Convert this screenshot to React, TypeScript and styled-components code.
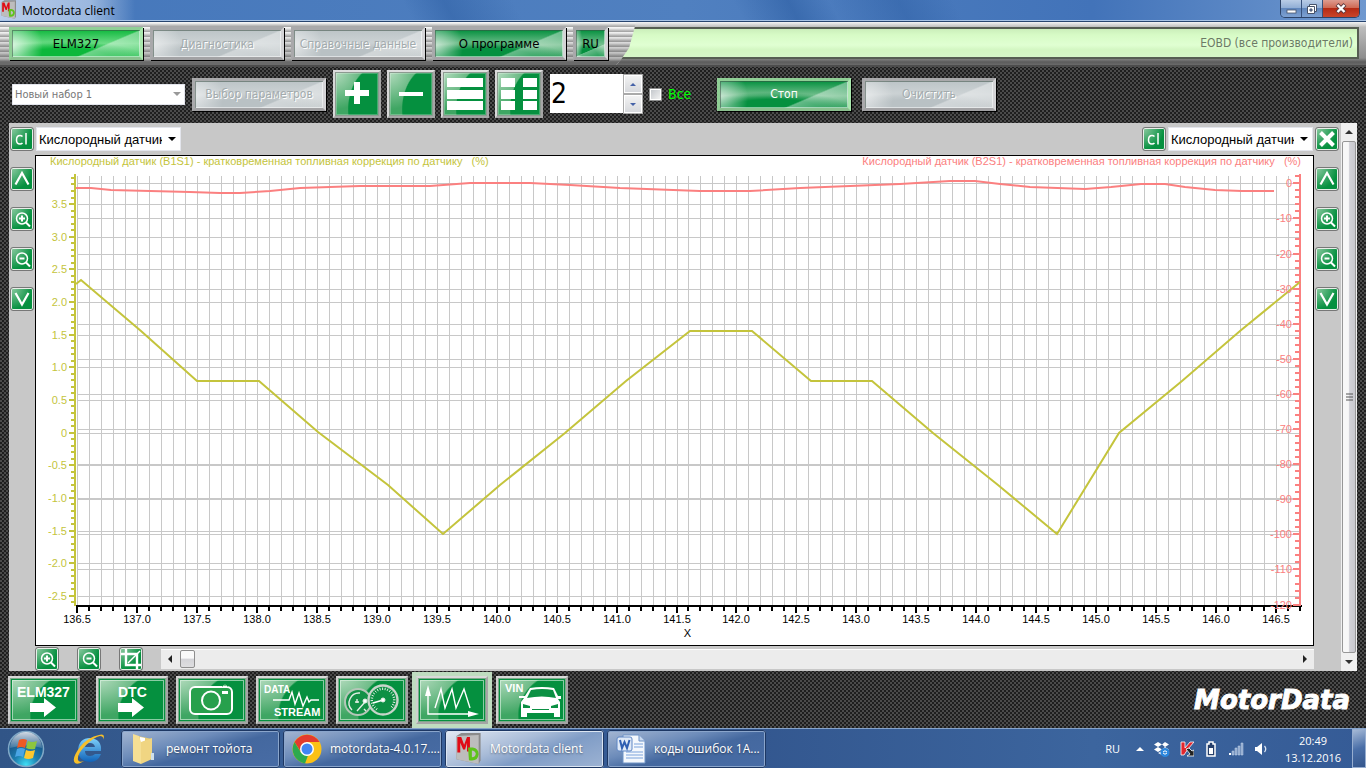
import React, { useLayoutEffect, useRef, useState } from 'react';
import styled, { createGlobalStyle, css } from 'styled-components';

const ui = '"DejaVu Sans Condensed", "DejaVu Sans", sans-serif';
const shell = '"Open Sans", "Noto Sans", sans-serif';
const arial = '"Liberation Sans", Arial, sans-serif';

const GlobalStyle = createGlobalStyle`
  * { box-sizing: border-box; }
  body { margin: 0; background: #222; font-family: ${ui}; }
  button, input, select { margin: 0; font-family: inherit; }
  svg { display: block; flex: none; }
`;

const Page = styled.div`
  display: flex;
  flex-direction: column;
  height: 100vh;
  min-height: 560px;
  min-width: 1020px;
  background: repeating-conic-gradient(#1e1e1e 0 25%, #4b4b4b 0 50%) 0 0 / 4px 4px;
`;

/* ---------- window title ---------- */
const TitleBar = styled.header`
  display: flex;
  align-items: flex-start;
  height: 22px;
  flex: none;
  padding: 0 6px 0 1px;
  border-bottom: 1px solid #28456f;
  box-shadow: inset 0 -1px #a9c4e6;
  background:
    linear-gradient(90deg, rgba(225, 235, 250, 0.75) 0, rgba(200, 218, 242, 0.65) 90px, transparent 135px),
    linear-gradient(62deg, transparent 30%, rgba(30, 80, 150, 0.35) 33%, transparent 38%, transparent 54%, rgba(30, 80, 150, 0.4) 58%, transparent 61%, rgba(30, 80, 150, 0.3) 66%, transparent 70%),
    linear-gradient(90deg, #4577bb, #5080c0 50%, #4273b9 80%, #6f98cf);
`;
const WindowTitle = styled.h1`
  flex: 1;
  margin: 0 0 0 6px;
  font: 400 12px/21px ${shell};
  color: #000;
`;
const WindowButtons = styled.div`
  display: flex;
  height: 18px;
  border: 1px solid #2c4368;
  border-top: 0;
  border-radius: 0 0 5px 5px;
  overflow: hidden;
`;
const WindowButton = styled.button<{ $close?: boolean }>`
  display: grid;
  place-items: center;
  width: ${p => (p.$close ? 36 : 21)}px;
  padding: 0;
  border: 0;
  border-right: ${p => (p.$close ? 0 : 1)}px solid #37517c;
  background: ${p =>
    p.$close
      ? 'linear-gradient(#dd9c90, #cf6a55 45%, #b52a14 50%, #c9452a)'
      : 'linear-gradient(#b9cce6, #92afd6 45%, #6187bd 50%, #7ea2d3)'};
`;

/* ---------- menu ---------- */
const MenuBar = styled.nav`
  display: flex;
  align-items: stretch;
  height: 43px;
  flex: none;
  background: linear-gradient(#f4f4f4, #bdbdbd 5px, #8d8d8d 36px, #5c5c5c 40px, #6a6a6a);
`;
const Steel = styled.div`
  display: flex;
  align-items: flex-start;
  gap: 7px;
  width: 636px;
  padding: 5px 0 0 9px;
  background:
    linear-gradient(transparent 8px, rgba(60, 60, 60, 0.35) 38px, #6a6a6a 40px),
    repeating-linear-gradient(#f4f4f4 0 1px, #dcdcdc 2px, #b0b0b0 4px, #a2a2a2 5px);
  clip-path: polygon(0 0, 100% 0, 634px 8px, 629px 26px, 620px 39px, 616px 100%, 0 100%);
`;
const Status = styled.output`
  flex: 1;
  height: 32px;
  margin: 5px 7px 0 -16px;
  padding-right: 4px;
  border: 2px solid #565d52;
  border-left: 0;
  background: linear-gradient(#cbeebb, #d7fbc6 6px, #e0ffd2 16px, #d3f6c2 21px, #d6f6c8);
  color: #6c7a66;
  font: 400 12px/29px ${ui};
  text-align: right;
`;

const green = css`
  color: #000;
  background:
    linear-gradient(157deg, transparent 66%, rgba(255, 255, 255, 0.38) 68%, rgba(255, 255, 255, 0.1) 96%),
    radial-gradient(ellipse 22% 110% at 0 60%, rgba(255, 255, 255, 0.6), transparent),
    radial-gradient(ellipse 62% 58% at 42% 100%, #05903f 55%, transparent),
    linear-gradient(#05903f, #76c190 55%, #2f9f5c);
`;
const bright = css`
  color: #000;
  background:
    linear-gradient(157deg, transparent 66%, rgba(255, 255, 255, 0.4) 68%, rgba(255, 255, 255, 0.15) 96%),
    radial-gradient(ellipse 24% 120% at 0 60%, rgba(255, 255, 255, 0.75), transparent),
    radial-gradient(ellipse 62% 58% at 42% 100%, #0cb83b 55%, transparent),
    linear-gradient(#12b93f, #6cdc86 50%, #35c55b);
`;
const disabledFace = css`
  color: #a3abad;
  text-shadow: 1px 1px #fff;
  background:
    linear-gradient(157deg, transparent 66%, rgba(255, 255, 255, 0.35) 68%, rgba(255, 255, 255, 0.2) 96%),
    radial-gradient(ellipse 22% 120% at 0 60%, rgba(255, 255, 255, 0.5), transparent),
    radial-gradient(ellipse 62% 58% at 42% 100%, #b9c1c4 55%, transparent),
    linear-gradient(#bcc4c7, #cdd3d5 50%, #bfc6c8);
`;
type Tone = 'green' | 'bright' | 'disabled';
const PlateButton = styled.button<{ $tone: Tone; $small?: boolean; $mint?: boolean }>`
  flex: none;
  width: ${p => (p.$small ? 35 : 134)}px;
  height: 33px;
  padding: 0;
  border: 3px solid;
  border-color: ${p =>
    p.$tone === 'bright' || p.$mint ? '#8fcf95 #a9e8ae #8ac08e #8fcf95' : '#a9a9ab #d4d4d6 #a2a2a4 #a9a9ab'};
  ${p => (p.$tone === 'green' ? green : p.$tone === 'bright' ? bright : disabledFace)}
  background-origin: padding-box;
  background-clip: padding-box;
  background-repeat: no-repeat;
  box-shadow: inset 1px 1px rgba(60, 80, 70, 0.55), inset -1px -1px rgba(255, 255, 255, 0.5), 1px 1px #000;
  font: 400 13px/26px ${ui};
  font-size: ${p => (p.$tone === 'disabled' || p.$mint ? 12 : 13)}px;
  white-space: nowrap;
  ${p => p.$mint && 'color: #fff;'}
`;

/* ---------- tool bar ---------- */
const ToolBar = styled.div`
  display: flex;
  align-items: center;
  height: 58px;
  flex: none;
  padding: 0 12px;
  box-shadow: inset 0 2px #4c4c4c;
`;
const Drop = styled.div<{ $width: number; $dim?: boolean }>`
  display: grid;
  align-items: center;
  flex: none;
  width: ${p => p.$width}px;
  height: ${p => (p.$dim ? 21 : 24)}px;
  background: #fff;
  border: 1px solid #e3e5ec;
  > * { grid-area: 1 / 1; }
  > svg { justify-self: end; margin-right: ${p => (p.$dim ? 3 : 4)}px; pointer-events: none; }
  select {
    appearance: none;
    width: 100%;
    height: 100%;
    border: 0;
    padding: 0 18px 0 2px;
    background: transparent;
    color: ${p => (p.$dim ? '#777' : '#000')};
    opacity: 1;
    font-size: ${p => (p.$dim ? 11 : 13)}px;
    font-family: ${p => (p.$dim ? ui : arial)};
    overflow: hidden;
  }
`;
const ToolGroup = styled.div`
  display: flex;
  gap: 6px;
  margin-right: 7px;
`;
const gloss = css`
  background:
    radial-gradient(ellipse 82% 115% at 100% 85%, #05903f 84%, transparent 87%),
    radial-gradient(ellipse at 0 0, #b5dcbf, #3fa663 60%);
`;
const ToolButton = styled.button`
  display: grid;
  place-items: center;
  width: 48px;
  height: 48px;
  padding: 0;
  border: 2px solid;
  border-color: #dedede #a6a6a6 #a6a6a6 #d8d8d8;
  box-shadow: inset 0 0 0 1px #8c9a90, inset 0 0 0 2px rgba(255, 255, 255, 0.25);
  ${gloss}
`;
const Spinner = styled.div`
  display: flex;
  height: 40px;
  input {
    width: 73px;
    height: 39px;
    padding: 0 0 0 1px;
    border: 0;
    border-radius: 0;
    background: #fff;
    color: #000;
    font-size: 28px;
    appearance: textfield;
  }
`;
const SpinKeys = styled.div`
  display: grid;
  grid-template-rows: 1fr 1fr;
  width: 20px;
  background: #fff;
`;
const SpinKey = styled.button`
  display: grid;
  place-items: center;
  padding: 0;
  border: 1px solid #aaa;
  outline: 1px solid #fff;
  outline-offset: -2px;
  background: linear-gradient(#f4f4f4, #d5d7db);
`;
const CheckLabel = styled.label`
  display: flex;
  align-items: center;
  gap: 6px;
  width: 68px;
  margin-left: 6px;
  color: #00ff00;
  font-size: 14px;
  input {
    appearance: none;
    width: 13px;
    height: 13px;
    border: 1px solid #8e8f8f;
    outline: 1px solid #fff;
    outline-offset: -2px;
    background: linear-gradient(135deg, #bfc3c8, #f6f6f6);
  }
`;
const Actions = styled.div`
  display: flex;
  gap: 11px;
`;

/* ---------- chart panel ---------- */
const Panel = styled.main`
  display: flex;
  flex: 1;
  min-height: 0;
  margin: 0 9px;
  background: #c8c8c8;
`;
const Side = styled.div<{ $width: number }>`
  display: flex;
  flex-direction: column;
  gap: 16px;
  flex: none;
  width: ${p => p.$width}px;
  padding: 4px 1px;
`;
const Mini = styled.button`
  display: grid;
  place-items: center;
  flex: none;
  width: 24px;
  height: 24px;
  padding: 0;
  border: 1px solid #777;
  border-radius: 3px;
  box-shadow: inset 0 0 0 1px #e8efe9;
  background: radial-gradient(ellipse at 0 0, #8fcba3, #05903f 70%);
`;
const Center = styled.div`
  display: flex;
  flex-direction: column;
  flex: 1;
  min-width: 0;
`;
const PickerRow = styled.div`
  display: flex;
  justify-content: space-between;
  align-items: center;
  height: 32px;
  flex: none;
  padding: 0 1px 0 1px;
`;
const Picker = styled.div`
  display: flex;
  gap: 2px;
`;
const ChartFrame = styled.figure`
  flex: 1;
  min-height: 0;
  margin: 0;
  overflow: hidden;
  border: 1px solid #000;
  background: #fff;
  text { font-family: ${arial}; font-size: 11px; }
`;
const FootRow = styled.div`
  display: flex;
  align-items: center;
  gap: 18px;
  height: 25px;
  flex: none;
`;
const HScroll = styled.div`
  display: flex;
  align-items: center;
  flex: 1;
  gap: 8px;
  height: 20px;
  padding: 0 7px;
  border-top: 1px solid #fff;
  background: #ececec;
  i {
    width: 15px;
    height: 18px;
    margin-right: auto;
    border: 1px solid #8e8e8e;
    border-radius: 2px;
    background: linear-gradient(#fafafa 45%, #d4d4d8 50%, #dedee0);
  }
`;
const VScroll = styled.div`
  display: flex;
  flex-direction: column;
  align-items: center;
  flex: none;
  width: 16px;
  background: #f0f0f0;
  > svg { margin: 7px 0; }
  i {
    display: grid;
    place-items: center;
    flex: 1;
    width: 14px;
    border: 1px solid #979797;
    border-radius: 2px;
    background: linear-gradient(90deg, #f8f8f8 45%, #d2d2d8 55%, #c9c9ce);
  }
`;

/* ---------- mode bar ---------- */
const ModeBar = styled.nav`
  display: flex;
  align-items: center;
  height: 57px;
  flex: none;
  padding: 0 16px 0 4px;
`;
const ModeSlot = styled.div<{ $active?: boolean; $wide?: boolean }>`
  display: grid;
  place-items: center;
  width: 80px;
  height: 56px;
  margin-right: ${p => (p.$wide ? 8 : 0)}px;
  background: ${p => (p.$active ? '#bfdcc0' : 'transparent')};
`;
const ModeButton = styled.button`
  width: 72px;
  height: 48px;
  padding: 0;
  border: 2px solid;
  border-color: #d9d9d9 #a5a5a5 #a5a5a5 #cfcfcf;
  box-shadow: inset 0 0 0 1px #7fa88b, inset 0 0 0 2px #05903f, inset 0 0 0 3px rgba(225, 245, 230, 0.6);
  ${gloss}
  text { font-family: ${arial}; font-weight: 700; fill: #fff; }
`;
const Brand = styled.strong`
  margin-left: auto;
  color: #fff;
  font: italic 700 26px/32px "DejaVu Sans", sans-serif;
  -webkit-text-stroke: 1px #fff;
`;

/* ---------- task bar ---------- */
const TaskBar = styled.footer`
  display: flex;
  align-items: center;
  height: 40px;
  flex: none;
  border-top: 1px solid #86a3ca;
  background: linear-gradient(90deg, #315587, #3a619b 30%, #33578f 55%, #3c659e 80%, #355b96);
  font-family: ${shell};
  color: #fff;
`;
const Bare = styled.button`
  padding: 0;
  border: 0;
  background: none;
`;
const Launchers = styled.div`
  display: flex;
  align-items: center;
  gap: 27px;
  width: 121px;
  padding-left: 7px;
`;
const Tasks = styled.div`
  display: flex;
  gap: 3px;
  flex: 1;
`;
const Task = styled.button<{ $active?: boolean }>`
  display: flex;
  align-items: center;
  gap: 8px;
  width: 159px;
  height: 38px;
  padding: 0 8px;
  border: 1px solid ${p => (p.$active ? '#e1e9f5' : '#8ea9cd')};
  border-radius: 3px;
  outline: 1px solid #1d3763;
  outline-offset: -1px;
  box-shadow: inset 0 0 0 1px ${p => (p.$active ? '#dbe5f2' : '#8aa5cb')};
  background: ${p =>
    p.$active
      ? 'linear-gradient(160deg, #e3eaf4, #a9bcd8 40%, #7f9cc6 60%, #9db3d3)'
      : 'linear-gradient(165deg, #a4b6d2, #6d8cba 35%, #44689f 55%, #486ca5)'};
  color: #fff;
  font-size: 12px;
  white-space: nowrap;
  text-shadow: 0 1px 2px rgba(0, 0, 0, 0.45);
  > svg { min-width: 28px; }
`;
const Tray = styled.div`
  display: flex;
  align-items: center;
  gap: 10px;
  font-size: 11px;
`;
const Lang = styled.span`
  margin-right: 6px;
  line-height: 16px;
`;
const Clock = styled.time`
  width: 78px;
  margin-left: 6px;
  font-size: 11px;
  line-height: 17px;
  text-align: center;
`;
const Desktop = styled.button`
  width: 14px;
  height: 39px;
  padding: 0;
  border: 1px solid #97aed0;
  background: linear-gradient(160deg, #a5b9d6, #4a6fa8 50%, #34568c);
`;

/* ---------- icons ---------- */
const Caret = ({ w = 8, up, fill = '#000' }: { w?: number; up?: boolean; fill?: string }) => (
  <svg width={w} height={w / 2} viewBox="0 0 8 4" aria-hidden="true">
    <path d={up ? 'M0 4L4 0L8 4Z' : 'M0 0H8L4 4Z'} fill={fill} />
  </svg>
);
const SideCaret = ({ left }: { left?: boolean }) => (
  <svg width="4" height="8" viewBox="0 0 4 8" aria-hidden="true">
    <path d={left ? 'M4 0L0 4L4 8Z' : 'M0 0L4 4L0 8Z'} fill="#222" />
  </svg>
);
const AppLogo = ({ w, h }: { w: number; h: number }) => (
  <svg width={w} height={h} viewBox="0 0 26 32" aria-hidden="true">
    <path d="M1 3L6 0H26V28L24 32L1 27Z" fill="#8b8b8b" />
    <path d="M1 3L24 2V32L1 27Z" fill="#bdbdbd" />
    <path d="M2 20V4H6L9 12L12 4H15V19H12V10L10 17H8L5 10V20Z" fill="#e00b16" />
    <path d="M13 15H18Q24 16 24 22Q23 30 14 28ZM17 18V25Q21 25 21 21Q20 18 17 18Z" fill="#5ec31a" fillRule="evenodd" />
  </svg>
);
const miniPaths = {
  cl: <><path d="M10.500 7.500Q9.500 6.500 8 6.500Q4.500 6.500 4.500 11Q4.500 15 8 15Q9.500 15 10.500 14" /><path d="M14 4V15.500" /></>,
  up: <path d="M3.500 15.500L10 4L16.500 15.500" strokeWidth="2.2" />,
  down: <path d="M3.500 4L10 15.500L16.500 4" strokeWidth="2.2" />,
  plus: <><circle cx="10" cy="9.500" r="5.500" /><path d="M14 13.500L18 17.500" strokeWidth="2" /><path d="M7 9.500H13M10 6.500V12.500" strokeWidth="2" /></>,
  minus: <><circle cx="10" cy="9.500" r="5.500" /><path d="M14 13.500L18 17.500" strokeWidth="2" /><path d="M7.500 9.500H12.500" strokeWidth="2" /></>,
  close: <path d="M3.500 3.500L16.500 16.500M16.500 3.500L3.500 16.500" strokeWidth="4" />,
  crop: <><path d="M0 5H16V20M5 0V16H20" strokeWidth="2.4" /><path d="M7 14L19 2" /></>,
};
const MiniIcon = ({ name, label }: { name: keyof typeof miniPaths; label: string }) => (
  <Mini type="button" aria-label={label}>
    <svg width="20" height="20" viewBox="0 0 20 20" fill="none" stroke="#fff" strokeWidth="1.5">{miniPaths[name]}</svg>
  </Mini>
);

const sideTools: [keyof typeof miniPaths, string][] = [
  ['up', 'Вверх'], ['plus', 'Увеличить'], ['minus', 'Уменьшить'], ['down', 'Вниз'],
];

const toolIcons = [
  { label: 'Добавить', art: <path d="M19 10H25V18H34V24H25V32H19V24H10V18H19Z" /> },
  { label: 'Удалить', art: <path d="M10 20H34V24H10Z" /> },
  { label: 'Строки', art: <path d="M4 6H40V15H4ZM4 18H40V27H4ZM4 29H40V38H4Z" /> },
  { label: 'Таблица', art: <path d="M4 6H18V15H4ZM26 6H40V15H26ZM4 18H18V27H4ZM26 18H40V27H26ZM4 29H18V38H4ZM26 29H40V38H26Z" /> },
];

const arrow = 'M20 25H34V20L46 29.500L34 39V34H20Z';
const spokes = Array.from({ length: 22 }, (_, i) => {
  const a = ((i * 13 + 125) * Math.PI) / 180;
  return `M${45 + 10 * Math.cos(a)} ${22 + 10 * Math.sin(a)}L${45 + 12.5 * Math.cos(a)} ${22 + 12.5 * Math.sin(a)}`;
}).join('');
const modes = [
  { label: 'ELM327', wide: true, art: <><text x="7" y="19" fontSize="14">ELM327</text><path d={arrow} fill="#fff" /></> },
  { label: 'DTC', art: <><text x="20" y="19" fontSize="14">DTC</text><path d={arrow} fill="#fff" /></> },
  {
    label: 'Камера',
    art: (
      <g fill="none" stroke="#fff" strokeWidth="2">
        <rect x="12" y="9" width="42" height="27" rx="5" fill="#27a04c" />
        <circle cx="33" cy="22.500" r="9" />
        <path d="M44 14.500H50" strokeWidth="3" /><path d="M44 9Q47 5 50 9" strokeWidth="1" stroke="#9fd3a8" />
      </g>
    ),
  },
  {
    label: 'Поток данных',
    art: (
      <>
        <text x="6" y="15" fontSize="10">DATA</text>
        <text x="16" y="38" fontSize="11">STREAM</text>
        <path d="M15 22H31L34 14L37 26L41 15L45 28L49 19L51 24L53 22H61" fill="none" stroke="#fff" strokeWidth="1.400" />
      </>
    ),
  },
  {
    label: 'Приборы',
    art: (
      <g fill="none" stroke="#e3eee5">
        <circle cx="20" cy="24" r="13" strokeWidth="2" stroke="#b4c7b8" fill="#149147" />
        <path d="M14 32A10 10 0 0 1 22 15M27 24L19 33M17 24H21M19 21V25M26 31L28 33" strokeWidth="1.400" />
        <circle cx="27" cy="23" r="2" fill="#fff" />
        <circle cx="45" cy="22" r="14.500" strokeWidth="2.400" stroke="#c8d5ca" fill="#0d9044" />
        <path d={spokes} />
        <path d="M35 25L45 22" strokeWidth="1.600" stroke="#fff" />
        <circle cx="45" cy="22" r="2" fill="#fff" />
      </g>
    ),
  },
  {
    label: 'Графики',
    active: true,
    art: (
      <g fill="none" stroke="#fff" strokeWidth="1.400">
        <path d="M10 16V36H52" />
        <path d="M10 7L13 18H7ZM61 36L50 33V39Z" fill="#fff" stroke="none" />
        <path d="M17 30L23 11L27 30L34 11L38 30L46 11L52 30" />
      </g>
    ),
  },
  {
    label: 'VIN',
    art: (
      <>
        <text x="7" y="14" fontSize="11">VIN</text>
        <path d="M32 10Q44 8 56 10L60 18L63 18V21H60L62 24V39H56V35H29V39H23V24L26 20H21V18H27Z" fill="#fff" />
        <path d="M33 12Q44 10 55 12L58 20Q44 17 29 20Z" fill="#0b9043" />
        <path d="M25 26L32 28V30H25ZM60 26L53 28V30H60ZM34 31H51V32H34Z" fill="#0b9043" />
      </>
    ),
  },
];

const StartOrb = () => (
  <svg width="38" height="38" viewBox="0 0 38 38" aria-hidden="true">
    <defs>
      <radialGradient id="orb" cx="50%" cy="95%" r="85%">
        <stop offset="0" stopColor="#3fe0f6" /><stop offset=".4" stopColor="#1d7fb0" /><stop offset="1" stopColor="#17467a" />
      </radialGradient>
      <linearGradient id="shine" x1="0" y1="0" x2="0" y2="1">
        <stop offset="0" stopColor="#fff" stopOpacity=".8" /><stop offset="1" stopColor="#fff" stopOpacity=".15" />
      </linearGradient>
    </defs>
    <circle cx="19" cy="19" r="17.500" fill="url(#orb)" stroke="#7fa8c6" strokeWidth="1.500" />
    <path d="M3 18A16 16 0 0 1 35 18Q19 13 3 18Z" fill="url(#shine)" />
    <path d="M12 10Q16 8 20 10L18 18Q14 16 10 18Z" fill="#ee5a24" />
    <path d="M21 11Q25 13 30 11L28 19Q23 20 19 18Z" fill="#8dc63f" />
    <path d="M10 19Q14 17 18 19L16 27Q12 25 8 27Z" fill="#4aa5e4" />
    <path d="M19 20Q23 22 28 20L26 28Q21 30 17 28Z" fill="#fdc82f" />
  </svg>
);
const Explorer = () => (
  <svg width="34" height="34" viewBox="0 0 34 34" aria-hidden="true">
    <defs>
      <linearGradient id="ie" x1="0" y1="0" x2="0" y2="1"><stop offset="0" stopColor="#7fd0fa" /><stop offset="1" stopColor="#0f62b8" /></linearGradient>
    </defs>
    <path d="M29 19H13Q13 24 18 24Q21 24 23 22H29Q26 30 18 30Q6 29 6 18Q7 6 18 6Q30 7 29 19ZM13 15H23Q22 11 18 11Q14 11 13 15Z" fill="url(#ie)" fillRule="evenodd" />
    <path d="M31 8Q34 1 27 3Q16 5 8 15Q-1 27 3 31Q6 33 12 29Q7 31 6 28Q5 22 13 14Q22 5 28 4Q32 4 31 8Z" fill="#f6bf2a" />
  </svg>
);
const Folder = () => (
  <svg width="28" height="32" viewBox="0 0 28 32" aria-hidden="true">
    <path d="M8 3L22 6V25L8 28Z" fill="#e6cc78" />
    <path d="M10 4L15 5V29L10 27Z" fill="#fff" />
    <path d="M3 1L9 3L11 9V31L3 28Z" fill="#f5df94" />
    <path d="M11 9L22 5V26L11 31Z" fill="#f0d582" />
    <path d="M21 20H24V27H21Z" fill="#cfe0ea" />
  </svg>
);
const Chrome = () => (
  <svg width="30" height="30" viewBox="0 0 30 30" aria-hidden="true">
    <circle cx="15" cy="15" r="14.500" fill="#fbc116" />
    <path d="M2.500 8A14.500 14.500 0 0 1 27.600 8H15L9 18Z" fill="#e33b2e" />
    <path d="M2.500 8L9 18.500Q12 22 16 21.500L13 29.500A14.500 14.500 0 0 1 2.500 8Z" fill="#2da94f" />
    <circle cx="15" cy="15" r="7" fill="#fff" /><circle cx="15" cy="15" r="5.500" fill="#4285f4" />
  </svg>
);
const Word = () => (
  <svg width="30" height="30" viewBox="0 0 30 30" aria-hidden="true">
    <path d="M7 1H23L29 7V29H7Z" fill="#f4f8fd" stroke="#6f93c6" />
    <path d="M23 1V7H29" fill="#c9daf0" stroke="#6f93c6" />
    <path d="M18 10H27M18 13H27M10 18H27M10 21H27M10 24H27" stroke="#7aa2db" />
    <rect x="1" y="3" width="15" height="14" rx="2" fill="#dfe9f7" stroke="#5f86c4" />
    <path d="M4 6L6 14L8.500 8L11 14L13.500 6" fill="none" stroke="#2f5fb3" strokeWidth="2" />
  </svg>
);

/* ---------- chart ---------- */
const YELLOW = '#c4c43c';
const PINK = '#fb8080';
type Point = [number, number];
const sensor1: Point[] = [
  [136.49, 2.27], [136.53, 2.33], [137.03, 1.55], [137.5, 0.79], [138.02, 0.79], [138.51, 0.01], [139.09, -0.8],
  [139.55, -1.56], [140.03, -0.8], [140.57, 0], [141.08, 0.79], [141.61, 1.56], [142.13, 1.56], [142.62, 0.79],
  [143.13, 0.79], [143.64, 0], [144.18, -0.8], [144.67, -1.56], [145.19, 0], [145.72, 0.79], [146.2, 1.55], [146.7, 2.3],
];
const sensor2: Point[] = [
  [136.49, -1.3], [136.62, -1.3], [136.78, -1.8], [137.11, -2.1], [137.44, -2.6], [137.69, -2.9], [137.86, -2.9],
  [138.11, -2.1], [138.36, -1.4], [138.86, -0.7], [139.44, -0.7], [139.78, 0], [140.28, 0], [140.61, -0.5],
  [141.03, -1.3], [141.7, -2.2], [142.11, -2.2], [142.53, -1.4], [142.95, -0.7], [143.36, -0.2], [143.78, 0.6],
  [143.99, 0.6], [144.2, -0.1], [144.45, -1], [144.91, -1.6], [145.12, -1], [145.37, -0.1], [145.57, -0.1],
  [145.74, -1], [145.99, -1.8], [146.22, -2.1], [146.48, -2.1],
];
const range = (from: number, to: number) => Array.from({ length: to - from + 1 }, (_, i) => from + i);

function Chart() {
  const frame = useRef<HTMLElement>(null);
  const [size, setSize] = useState({ w: 1277, h: 489 });
  useLayoutEffect(() => {
    const el = frame.current;
    if (!el) return;
    const measure = () => setSize({ w: el.clientWidth, h: el.clientHeight });
    measure();
    const watcher = new ResizeObserver(measure);
    watcher.observe(el);
    return () => watcher.disconnect();
  }, []);

  const { w, h } = size;
  const left = 41;
  const right = w - 13;
  const top = 20;
  const bottom = h - 40;
  const x = (v: number) => Math.round(left + ((v - 136.5) / 10.2) * (right - left));
  const y1 = (v: number) => Math.round(top + ((3.93 - v) / 6.57) * (bottom - top));
  const y2 = (v: number) => Math.round(top + ((2.08 - v) / 122.2) * (bottom - top));
  const line = (data: Point[], y: (v: number) => number) => data.map(([a, b]) => `${x(a)},${y(b)}`).join(' ');

  return (
    <ChartFrame ref={frame}>
      <svg width={w} height={h} role="img" aria-label="График кислородных датчиков">
        <g shapeRendering="crispEdges" stroke="#c8c8c8">
          {range(0, 102).map(i => <path key={i} d={`M${x(136.5 + i / 10) + 0.5} ${top}V${bottom}`} />)}
          {range(-5, 7).map(i => <path key={i} d={`M${left} ${y1(i / 2) + 0.5}H${right}`} />)}
          {range(0, 12).map(i => <path key={i} d={`M${left} ${y2(-i * 10) + 0.5}H${right}`} />)}
        </g>
        <g shapeRendering="crispEdges" stroke="#000" strokeWidth="2">
          <path d={`M${left - 1} ${bottom + 1}H${right + 2}`} />
          {range(0, 102).map(i => <path key={i} d={`M${x(136.5 + i / 10)} ${bottom}v${i % 5 ? 6 : 8}`} />)}
        </g>
        <g shapeRendering="crispEdges" stroke={YELLOW} strokeWidth="2">
          <path d={`M${left - 2} ${top - 2}V${bottom + 1}`} />
          {range(-26, 39).map(i => <path key={i} d={`M${left - 1} ${y1(i / 10)}h${i % 5 ? -5 : -7}`} />)}
        </g>
        <g shapeRendering="crispEdges" stroke={PINK} strokeWidth="2">
          <path d={`M${right} ${top - 2}V${bottom + 1}`} />
          {range(-60, 1).map(i => <path key={i} d={`M${right} ${y2(i * 2)}h${i % 5 ? -5 : -7}`} />)}
        </g>
        <polyline points={line(sensor2, y2)} fill="none" stroke={PINK} strokeWidth="2" />
        <polyline points={line(sensor1, y1)} fill="none" stroke={YELLOW} strokeWidth="2" />
        <g textAnchor="middle">
          {range(0, 20).map(i => <text key={i} x={x(136.5 + i / 2)} y={bottom + 18}>{(136.5 + i / 2).toFixed(1)}</text>)}
          <text x={(w + 26) / 2} y={bottom + 32}>X</text>
        </g>
        <g textAnchor="end" fill={YELLOW}>
          {range(-5, 7).map(i => <text key={i} x={left - 10} y={y1(i / 2) + 4}>{i ? (i / 2).toFixed(1) : '0'}</text>)}
        </g>
        <g textAnchor="end" fill={PINK}>
          {range(0, 12).map(i => <text key={i} x={right - 8} y={y2(-i * 10) + 4}>{i ? -i * 10 : '0'}</text>)}
        </g>
        <text x="14" y="9" fill={YELLOW} xmlSpace="preserve">
          {'Кислородный датчик (B1S1) - кратковременная топливная коррекция по датчику   (%)'}
        </text>
        <text x={w - 12} y="9" fill={PINK} textAnchor="end" xmlSpace="preserve">
          {'Кислородный датчик (B2S1) - кратковременная топливная коррекция по датчику   (%)'}
        </text>
      </svg>
    </ChartFrame>
  );
}

const SensorPicker = ({ label }: { label: string }) => (
  <Drop $width={145}>
    <select aria-label={label}><option>Кислородный датчик</option></select>
    <Caret w={8} />
  </Drop>
);

export default function App() {
  return (
    <>
      <GlobalStyle />
      <Page>
        <TitleBar>
          <AppLogo w={15} h={19} />
          <WindowTitle>Motordata client</WindowTitle>
          <WindowButtons>
            <WindowButton aria-label="Свернуть">
              <svg width="11" height="10"><rect x="1" y="6" width="9" height="3" fill="#fff" stroke="#47536a" strokeWidth=".8" /></svg>
            </WindowButton>
            <WindowButton aria-label="Развернуть">
              <svg width="12" height="12" fill="none">
                <path d="M3.500 1.500H10.500V8.500H3.500Z" fill="#fff" stroke="#47536a" />
                <path d="M1.500 3.500H8.500V10.500H1.500Z" fill="#fff" stroke="#47536a" />
                <path d="M4 6H6V8H4Z" fill="#7f9cc6" stroke="#47536a" />
              </svg>
            </WindowButton>
            <WindowButton $close aria-label="Закрыть">
              <svg width="12" height="11" fill="none"><path d="M2 1.500L10 9.500M10 1.500L2 9.500" stroke="#5d3a3f" strokeWidth="4" /><path d="M2.500 2L9.500 9M9.500 2L2.500 9" stroke="#fff" strokeWidth="2.400" /></svg>
            </WindowButton>
          </WindowButtons>
        </TitleBar>

        <MenuBar>
          <Steel>
            <PlateButton $tone="bright">ELM327</PlateButton>
            <PlateButton $tone="disabled" disabled>Диагностика</PlateButton>
            <PlateButton $tone="disabled" disabled>Справочные данные</PlateButton>
            <PlateButton $tone="green">О программе</PlateButton>
            <PlateButton $tone="green" $small>RU</PlateButton>
          </Steel>
          <Status>EOBD (все производители)</Status>
        </MenuBar>

        <ToolBar>
          <ToolGroup>
            <Drop $width={173} $dim>
              <select aria-label="Набор параметров" disabled><option>Новый набор 1</option></select>
              <Caret w={8} fill="#999" />
            </Drop>
          </ToolGroup>
          <ToolGroup>
            <PlateButton $tone="disabled" disabled>Выбор параметров</PlateButton>
          </ToolGroup>
          <ToolGroup>
            {toolIcons.map(t => (
              <ToolButton key={t.label} type="button" aria-label={t.label}>
                <svg width="44" height="44" viewBox="0 0 44 44" fill="#fff">{t.art}</svg>
              </ToolButton>
            ))}
          </ToolGroup>
          <Spinner>
            <input type="number" defaultValue={2} aria-label="Количество" />
            <SpinKeys>
              <SpinKey aria-label="Больше"><Caret w={6} up fill="#4562a8" /></SpinKey>
              <SpinKey aria-label="Меньше"><Caret w={6} fill="#4562a8" /></SpinKey>
            </SpinKeys>
          </Spinner>
          <CheckLabel><input type="checkbox" />Все</CheckLabel>
          <Actions>
            <PlateButton $tone="green" $mint>Стоп</PlateButton>
            <PlateButton $tone="disabled" disabled>Очистить</PlateButton>
          </Actions>
        </ToolBar>

        <Panel>
          <Side $width={26}>
            <MiniIcon name="cl" label="Цвет первого графика" />
            {sideTools.map(([name, label]) => <MiniIcon key={name} name={name} label={label} />)}
          </Side>
          <Center>
            <PickerRow>
              <SensorPicker label="Первый датчик" />
              <Picker>
                <MiniIcon name="cl" label="Цвет второго графика" />
                <SensorPicker label="Второй датчик" />
              </Picker>
            </PickerRow>
            <Chart />
            <FootRow>
              <MiniIcon name="plus" label="Увеличить по времени" />
              <MiniIcon name="minus" label="Уменьшить по времени" />
              <MiniIcon name="crop" label="Вписать" />
              <HScroll><SideCaret left /><i /><SideCaret /></HScroll>
            </FootRow>
          </Center>
          <Side $width={27}>
            <MiniIcon name="close" label="Закрыть график" />
            {sideTools.map(([name, label]) => <MiniIcon key={name} name={name} label={label} />)}
          </Side>
          <VScroll>
            <Caret w={8} up fill="#333" />
            <i><svg width="7" height="8"><path d="M0 1H7M0 4H7M0 7H7" stroke="#555" /></svg></i>
            <Caret w={8} fill="#333" />
          </VScroll>
        </Panel>

        <ModeBar>
          {modes.map(m => (
            <ModeSlot key={m.label} $active={m.active} $wide={m.wide}>
              <ModeButton type="button" aria-label={m.label}>
                <svg width="68" height="44" viewBox="0 0 68 44">{m.art}</svg>
              </ModeButton>
            </ModeSlot>
          ))}
          <Brand>MotorData</Brand>
        </ModeBar>

        <TaskBar>
          <Launchers>
            <Bare aria-label="Пуск"><StartOrb /></Bare>
            <Bare aria-label="Internet Explorer"><Explorer /></Bare>
          </Launchers>
          <Tasks>
            <Task><Folder />ремонт тойота</Task>
            <Task><Chrome />motordata-4.0.17....</Task>
            <Task $active><AppLogo w={26} h={31} />Motordata client</Task>
            <Task><Word />коды ошибок 1A...</Task>
          </Tasks>
          <Tray>
            <Lang>RU</Lang>
            <Caret w={8} up fill="#fff" />
            <svg width="16" height="16" viewBox="0 0 16 16">
              <path d="M4 1L8 3.500L4 6L0 3.500ZM11 1L15 3.500L11 6L8 3.500ZM4 6L8 8.500L4 11L0 8.500ZM11 6L15 8.500L11 11L8 8.500ZM4 12L8 10L11 12L8 14Z" fill="#fff" />
              <circle cx="11" cy="11.500" r="4.500" fill="#2b86dd" /><path d="M9 11Q11 8.500 13 11M13 12Q11 14.500 9 12" stroke="#fff" fill="none" />
            </svg>
            <svg width="14" height="16" viewBox="0 0 14 16">
              <path d="M1 1H5V7L10 1H14L8 8L4 14H1Z" fill="#e0262d" stroke="#fff" strokeWidth=".8" />
              <path d="M6 8L9 7L12 10L14 9V15H7L10 13Z" fill="#222" stroke="#fff" strokeWidth=".8" />
            </svg>
            <svg width="14" height="16" viewBox="0 0 14 16">
              <path d="M5 1H9V3H11V15H3V3H5Z" fill="#26406c" stroke="#fff" strokeWidth="1.500" /><rect x="5" y="7" width="4" height="6" fill="#fff" />
            </svg>
            <svg width="16" height="14" viewBox="0 0 16 14">
              <path d="M1 11H3V13H1Z" fill="#fff" /><path d="M4 9H6V13H4ZM7 6H9V13H7ZM10 4H12V13H10ZM13 1H15V13H13Z" fill="#8da6cc" stroke="#c7d5ea" strokeWidth=".5" />
            </svg>
            <svg width="14" height="14" viewBox="0 0 14 14">
              <path d="M1 5H3L8 1V13L3 9H1Z" fill="#fff" /><path d="M10.500 4Q13 7 10.500 10" stroke="#dbe5f3" fill="none" strokeWidth="1.300" />
            </svg>
          </Tray>
          <Clock>20:49<br />13.12.2016</Clock>
          <Desktop aria-label="Показать рабочий стол" />
        </TaskBar>
      </Page>
    </>
  );
}
